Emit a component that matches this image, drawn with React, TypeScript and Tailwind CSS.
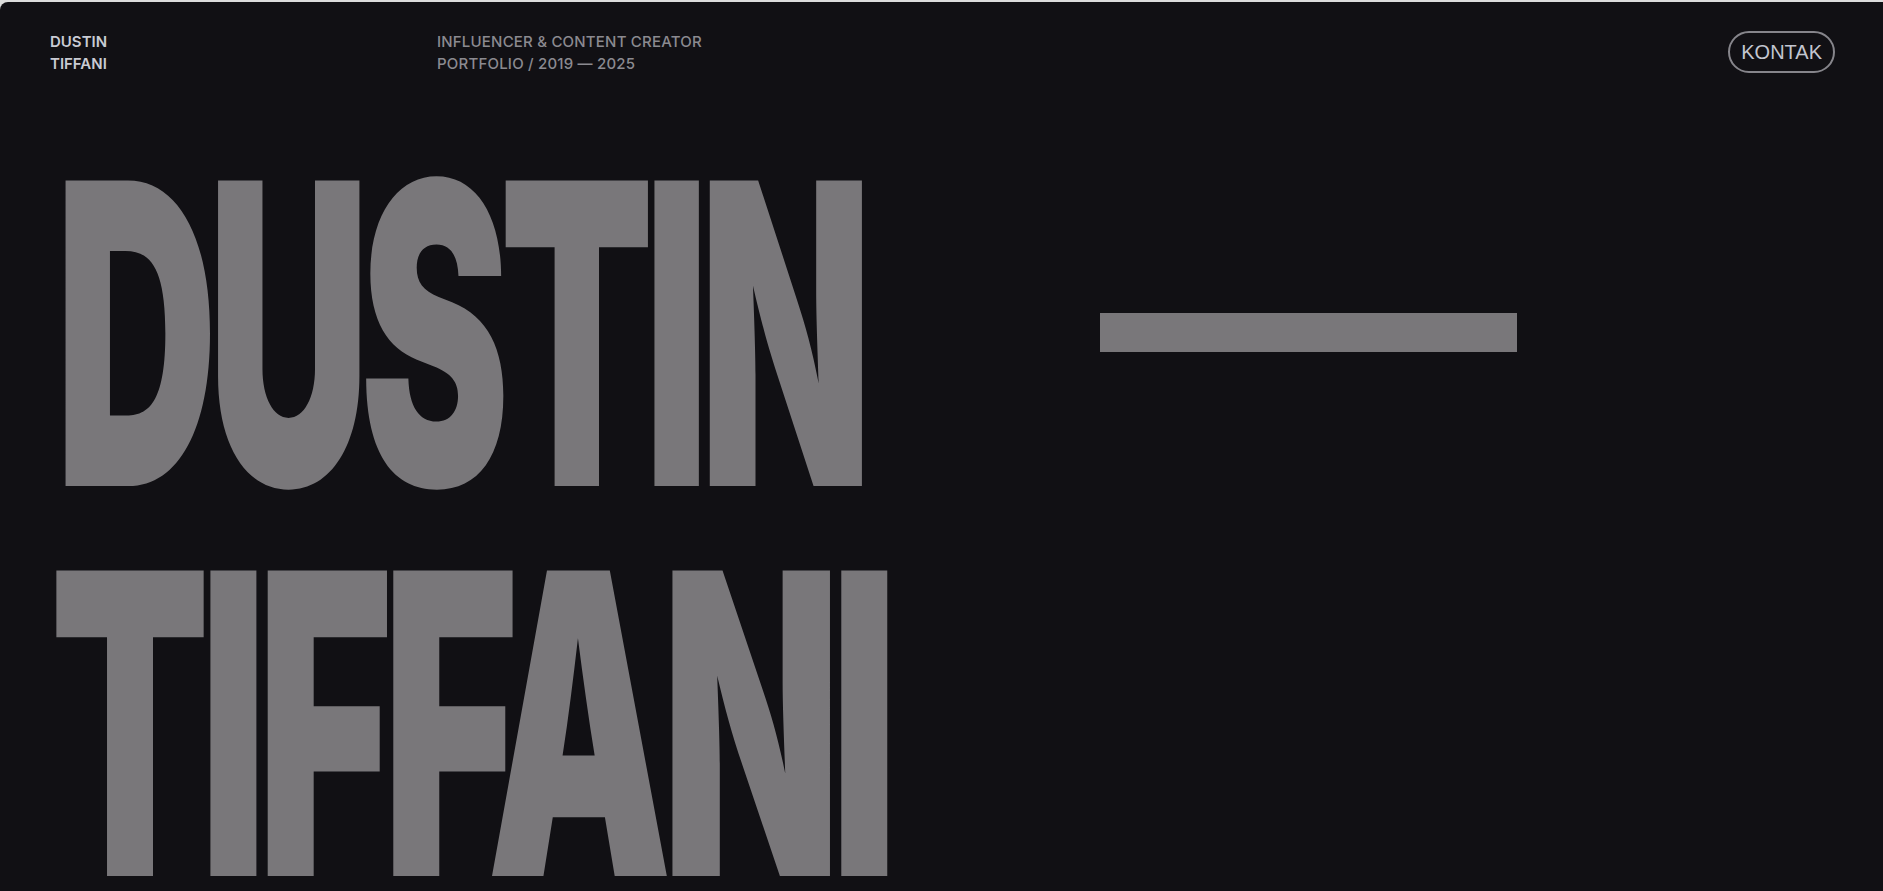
import React from "react";

const display = {
  fontFamily: "Inter, 'Liberation Sans', sans-serif",
};

export default function App() {
  return (
    <div className="min-h-screen bg-[#dcdcdc] pt-[2px]">
      <main
        className="min-h-[889px] overflow-hidden rounded-tl-[8px] bg-[#111014] text-[#79777a]"
        style={display}
      >
        <header className="flex items-center pl-[50px] pr-[48px] pt-[29px]">
          <div className="w-[387px] text-[15px] font-semibold leading-[22px] text-[#c9cbd3]">
            <div>DUSTIN</div>
            <div>TIFFANI</div>
          </div>
          <div className="text-[15px] font-medium leading-[22px] tracking-[0.2px] text-[#8b8a90]">
            <div>INFLUENCER &amp; CONTENT CREATOR</div>
            <div>PORTFOLIO / 2019 — 2025</div>
          </div>
          <a
            href="#kontak"
            className="-mt-[2px] ml-auto flex h-[42px] items-center rounded-full border-2 border-[#86858b] px-[11px] text-[20px] text-[#c3c6d0]"
            style={{ fontFamily: "'Liberation Sans', Arial, sans-serif" }}
          >
            KONTAK
          </a>
        </header>

        <section className="mt-[63px] px-[50px]">
          <div className="flex items-start">
            <div className="w-[1050px] shrink-0 pl-[5px]">
              <h1 className="origin-left scale-x-[0.536] whitespace-nowrap text-[420px] font-black leading-[390px] tracking-[-19px]">
                DUSTIN
              </h1>
            </div>
            <div className="mt-[175px] h-[39px] w-[417px] bg-[#79777a]" />
          </div>
          <div className="origin-left scale-x-[0.555] whitespace-nowrap text-[420px] font-black leading-[390px] tracking-[-19px]">
            TIFFANI
          </div>
        </section>
      </main>
    </div>
  );
}
